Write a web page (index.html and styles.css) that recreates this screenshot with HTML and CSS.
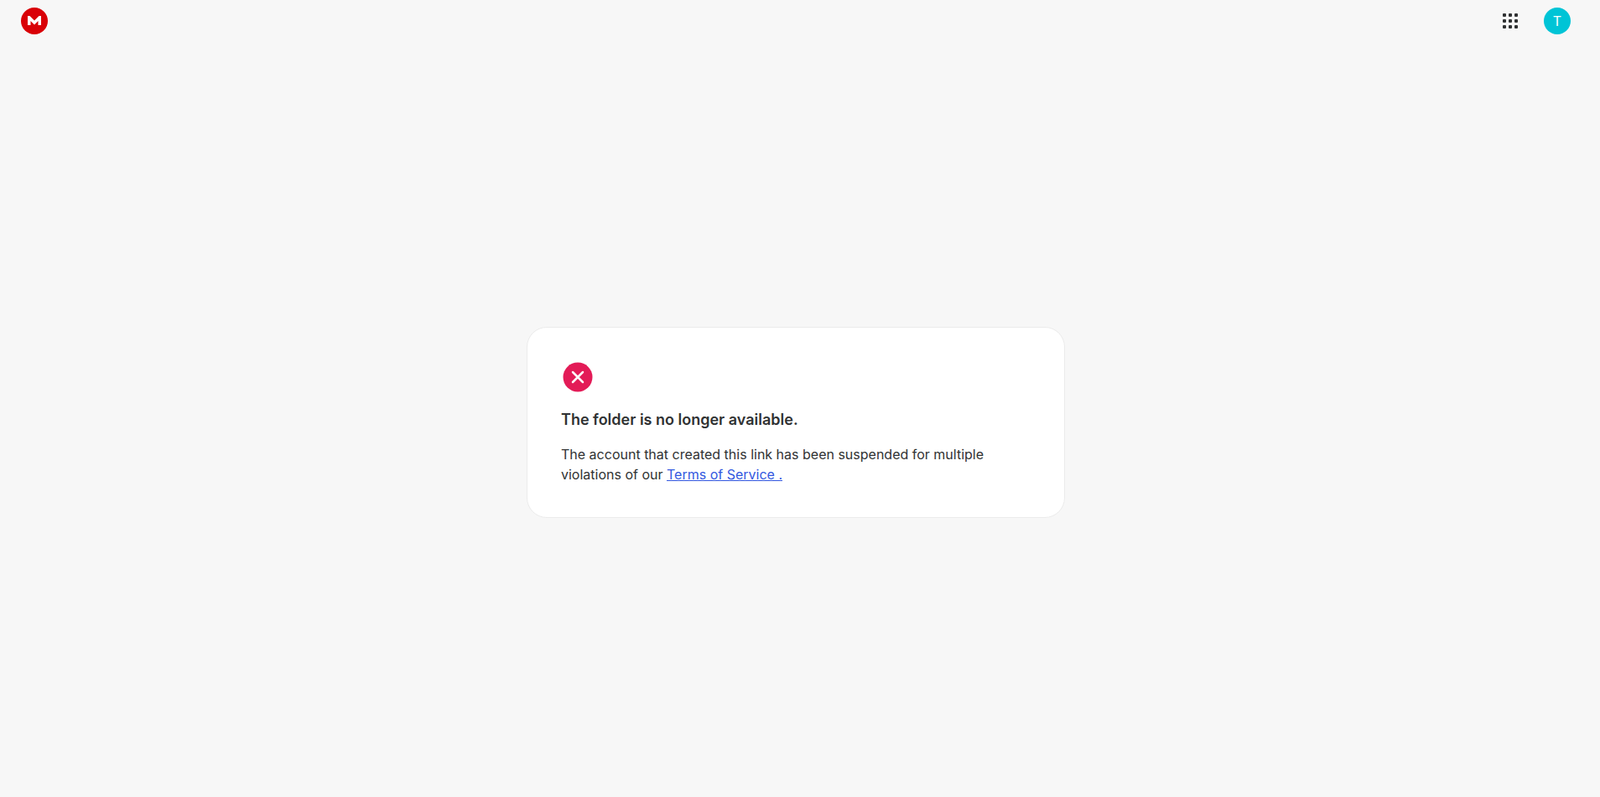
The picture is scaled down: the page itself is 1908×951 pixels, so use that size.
FILE: index.html
```html
<!DOCTYPE html>
<html lang="en">
<head>
  <meta charset="UTF-8">
  <title>MEGA</title>
  <link rel="stylesheet" href="styles.css">
</head>
<body>
  <header class="topbar">
    <svg class="logo" viewBox="0 0 32 32" width="32" height="32">
      <circle cx="16" cy="16" r="16" fill="#d90007"/>
      <path d="M8 21V10h2.500L16 15.500 21.500 10H24v11h-3.500v-5L16 20.500 11.500 16v5z" fill="#fff"/>
    </svg>
    <div class="topbar-right">
      <div class="apps">
        <i></i><i></i><i></i><i></i><i></i><i></i><i></i><i></i><i></i>
      </div>
      <div class="avatar">T</div>
    </div>
  </header>

  <main class="content">
    <section class="card">
      <svg class="error-icon" viewBox="0 0 36 36" width="36" height="36">
        <circle cx="18" cy="18" r="17.500" fill="#e31b57"/>
        <path d="M12 12l12 12M24 12l-12 12" stroke="#fff" stroke-width="2.500" stroke-linecap="round"/>
      </svg>
      <h1>The folder is no longer available.</h1>
      <p>The account that created this link has been suspended for multiple violations of our <a href="#">Terms of Service .</a></p>
    </section>
  </main>
</body>
</html>
```

FILE: styles.css
```css
* {
  box-sizing: border-box;
}
html, body {
  height: 100%;
}
body {
  margin: 0;
  display: flex;
  flex-direction: column;
  background: #f7f7f7;
  color: #303233;
  font-family: Inter, "Liberation Sans", sans-serif;
  overflow: hidden;
}
.topbar {
  display: flex;
  justify-content: space-between;
  align-items: center;
  height: 50px;
  padding: 0 35px 0 25px;
}
.logo {
  display: block;
}
.topbar-right {
  display: flex;
  align-items: center;
  gap: 31px;
}
.apps {
  display: grid;
  grid-template-columns: repeat(3, 4px);
  gap: 3px;
}
.apps i {
  width: 4px;
  height: 4px;
  border-radius: 1px;
  background: #303233;
}
.avatar {
  width: 32px;
  height: 32px;
  border-radius: 50%;
  background: #00c4d6;
  color: #fff;
  font-size: 16px;
  line-height: 32px;
  text-align: center;
}
.content {
  flex: 1;
  display: flex;
  justify-content: center;
  align-items: center;
  padding: 7px 10px 0 0;
}
.card {
  width: 642px;
  height: 228px;
  padding: 41px 40px 40px;
  background: #fff;
  border: 1px solid #ebebeb;
  border-radius: 24px;
}
.error-icon {
  display: block;
  margin-bottom: 21px;
  margin-left: 2px;
}
h1 {
  margin: 0 0 17px;
  font-size: 18px;
  line-height: 24px;
  font-weight: 600;
}
p {
  margin: 0;
  font-size: 16px;
  line-height: 24px;
}
a {
  color: #3358e0;
}
```
